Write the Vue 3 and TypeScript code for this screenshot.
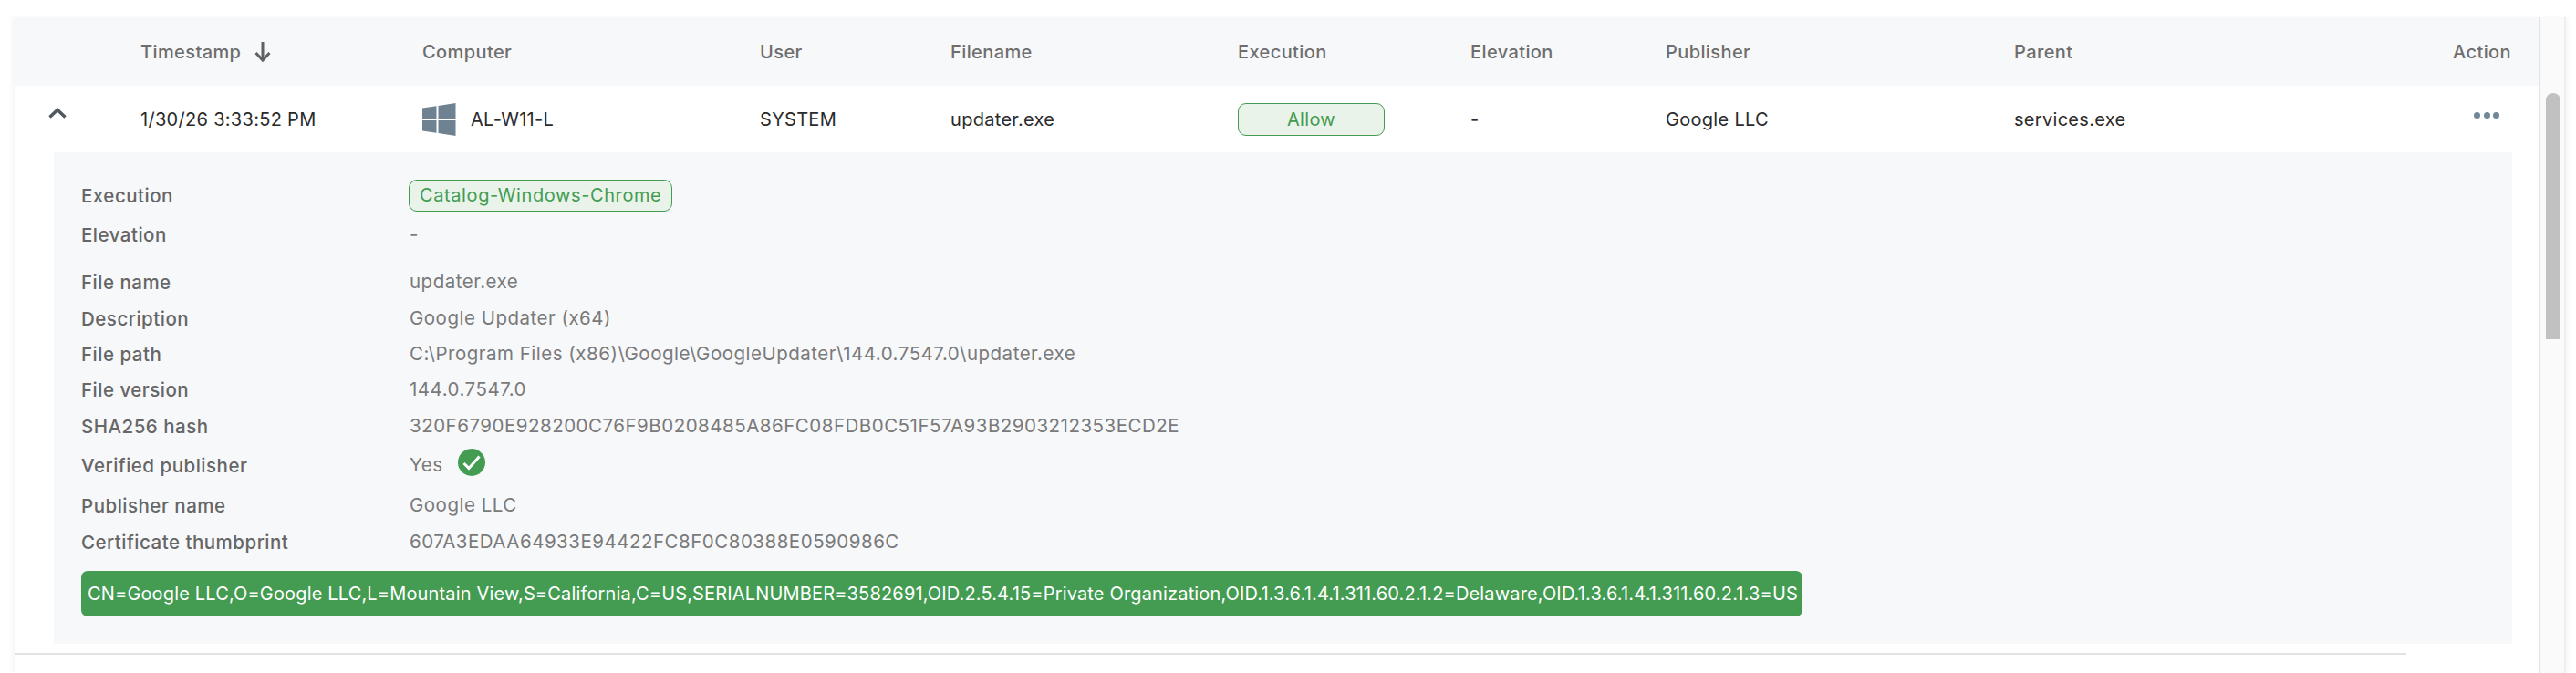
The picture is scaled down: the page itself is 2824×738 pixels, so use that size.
<template>
  <div class="page">
    <div class="table">
      <div class="cols head">
        <div></div>
        <div class="sorted">
          Timestamp
          <svg width="20" height="24" viewBox="0 0 20 24">
            <path d="M10 1v19M2.500 13 10 21l7.500-8" fill="none" stroke="#616161" stroke-width="3" />
          </svg>
        </div>
        <div v-for="h in heads" :key="h">{{ h }}</div>
        <div class="end">Action</div>
      </div>

      <div class="cols row">
        <div class="toggle">
          <svg width="20" height="12" viewBox="0 0 20 12">
            <path d="M1.500 10.500 10 2.500l8.500 8" fill="none" stroke="#50595f" stroke-width="3.500" />
          </svg>
        </div>
        <div>1/30/26 3:33:52 PM</div>
        <div class="computer">
          <svg width="37" height="36" viewBox="0 0 37 36">
            <path d="M0 5.500 15.500 3.200V17H0zM17.500 2.900 36.500 0V17H17.500zM0 19H15.500V32.800L0 30.500zM17.500 19H36.500V36L17.500 33.100z" fill="#6f8292" />
          </svg>
          AL-W11-L
        </div>
        <div>SYSTEM</div>
        <div>updater.exe</div>
        <div><span class="pill">Allow</span></div>
        <div>-</div>
        <div>Google LLC</div>
        <div>services.exe</div>
        <div class="dots"><i></i><i></i><i></i></div>
      </div>

      <div class="detail">
        <div class="line chip-line">
          <div class="label">Execution</div>
          <span class="chip">Catalog-Windows-Chrome</span>
        </div>
        <div class="line elevation">
          <div class="label">Elevation</div>
          <div class="value">-</div>
        </div>

        <div v-for="f in fileInfo" :key="f.label" class="line">
          <div class="label">{{ f.label }}</div>
          <div class="value">{{ f.value }}</div>
        </div>

        <div class="line verified">
          <div class="label">Verified publisher</div>
          <div class="value yes">
            Yes
            <svg width="30" height="30" viewBox="0 0 30 30">
              <circle cx="15" cy="15" r="15" fill="#439c52" />
              <path d="M6.500 16 12 21.500 23.500 8.500" fill="none" stroke="#fff" stroke-width="3" />
            </svg>
          </div>
        </div>

        <div v-for="f in certInfo" :key="f.label" class="line">
          <div class="label">{{ f.label }}</div>
          <div class="value">{{ f.value }}</div>
        </div>

        <div class="subject">
          CN=Google LLC,O=Google LLC,L=Mountain View,S=California,C=US,SERIALNUMBER=3582691,OID.2.5.4.15=Private Organization,OID.1.3.6.1.4.1.311.60.2.1.2=Delaware,OID.1.3.6.1.4.1.311.60.2.1.3=US
        </div>
      </div>

      <div class="rule"></div>
    </div>

    <div class="scrollbar">
      <div class="thumb"></div>
    </div>
  </div>
</template>

<script setup lang="ts">
const heads = ['Computer', 'User', 'Filename', 'Execution', 'Elevation', 'Publisher', 'Parent']

const fileInfo = [
  { label: 'File name', value: 'updater.exe' },
  { label: 'Description', value: 'Google Updater (x64)' },
  { label: 'File path', value: 'C:\\Program Files (x86)\\Google\\GoogleUpdater\\144.0.7547.0\\updater.exe' },
  { label: 'File version', value: '144.0.7547.0' },
  { label: 'SHA256 hash', value: '320F6790E928200C76F9B0208485A86FC08FDB0C51F57A93B2903212353ECD2E' },
]

const certInfo = [
  { label: 'Publisher name', value: 'Google LLC' },
  { label: 'Certificate thumbprint', value: '607A3EDAA64933E94422FC8F0C80388E0590986C' },
]
</script>

<style>
html,
body {
  margin: 0;
  background: #fff;
  overflow: hidden;
}
</style>

<style scoped>
.page {
  display: flex;
  width: 2808px;
  height: 719px;
  padding: 19px 0 0 16px;
  overflow: hidden;
  font-family: Inter, "Liberation Sans", sans-serif;
  font-size: 20px;
  letter-spacing: 0.3px;
  color: #2b2b2b;
}
.table {
  width: 2767px;
  flex: none;
  box-shadow: -3px 0 4px rgba(0, 0, 0, 0.04);
}
.cols {
  display: grid;
  grid-template-columns: 138px 309px 370px 209px 315px 255px 214px 382px 400px 1fr;
  align-items: center;
  padding-right: 30px;
}
.head {
  height: 75px;
  background: #f7f8fa;
  color: #6e6e6e;
  font-weight: 500;
  letter-spacing: 0.4px;
}
.sorted {
  display: flex;
  align-items: center;
  gap: 14px;
}
.end {
  text-align: right;
}
.row {
  height: 73px;
}
.toggle {
  display: flex;
  align-self: start;
  padding: 24px 0 0 37px;
}
.computer {
  display: flex;
  align-items: center;
  gap: 16px;
}
.pill {
  display: block;
  width: 161px;
  height: 36px;
  line-height: 34px;
  box-sizing: border-box;
  text-align: center;
  color: #439c52;
  background: #e9f3ea;
  border: 1px solid #439c52;
  border-radius: 9px;
}
.dots {
  display: flex;
  justify-content: flex-end;
  gap: 3.5px;
  padding: 0 13px 8px 0;
}
.dots i {
  width: 7px;
  height: 7px;
  border-radius: 50%;
  background: #6f8798;
}
.detail {
  margin: 0 29px 0 43px;
  height: 539px;
  box-sizing: border-box;
  padding: 30px 29px;
  background: #f7f8fa;
}
.line {
  display: grid;
  grid-template-columns: 361px 1fr;
  align-items: center;
  height: 39.4px;
}
.chip-line {
  height: 35px;
}
.elevation {
  height: 58px;
  padding-bottom: 8px;
  box-sizing: border-box;
}
.label {
  padding-left: 1px;
  color: #666;
  font-size: 20.5px;
  font-weight: 500;
  letter-spacing: 0.5px;
}
.value {
  color: #7a7a7a;
  font-size: 20.5px;
  letter-spacing: 0.5px;
  padding-bottom: 2px;
}
.chip {
  justify-self: start;
  margin-left: -1px;
  height: 35px;
  line-height: 33px;
  box-sizing: border-box;
  padding: 0 11px;
  letter-spacing: 0.6px;
  color: #439c52;
  background: #e9f3ea;
  border: 1px solid #439c52;
  border-radius: 9px;
}
.verified {
  height: 48px;
}
.yes {
  display: flex;
  align-items: center;
  gap: 16px;
}
.yes svg {
  margin-bottom: 6px;
}
.subject {
  margin-top: 12px;
  height: 50px;
  line-height: 50px;
  box-sizing: border-box;
  padding-left: 7px;
  margin-left: 1px;
  width: 1887px;
  color: #fff;
  letter-spacing: 0.16px;
  background: #439c52;
  border-radius: 7px;
  white-space: nowrap;
}
.rule {
  margin-top: 10px;
  width: 2622px;
  height: 2px;
  background: #e2e2e2;
}
.scrollbar {
  width: 30px;
  flex: none;
  box-sizing: border-box;
  padding: 83px 0 0 6px;
  background: #fafafa;
  border-left: 2px solid #e2e2e2;
  border-right: 2px solid #efefef;
  box-shadow: 3px 0 4px rgba(0, 0, 0, 0.03);
}
.thumb {
  width: 16px;
  height: 270px;
  background: #c1c1c1;
  border-radius: 8px 8px 0 0;
}
</style>
